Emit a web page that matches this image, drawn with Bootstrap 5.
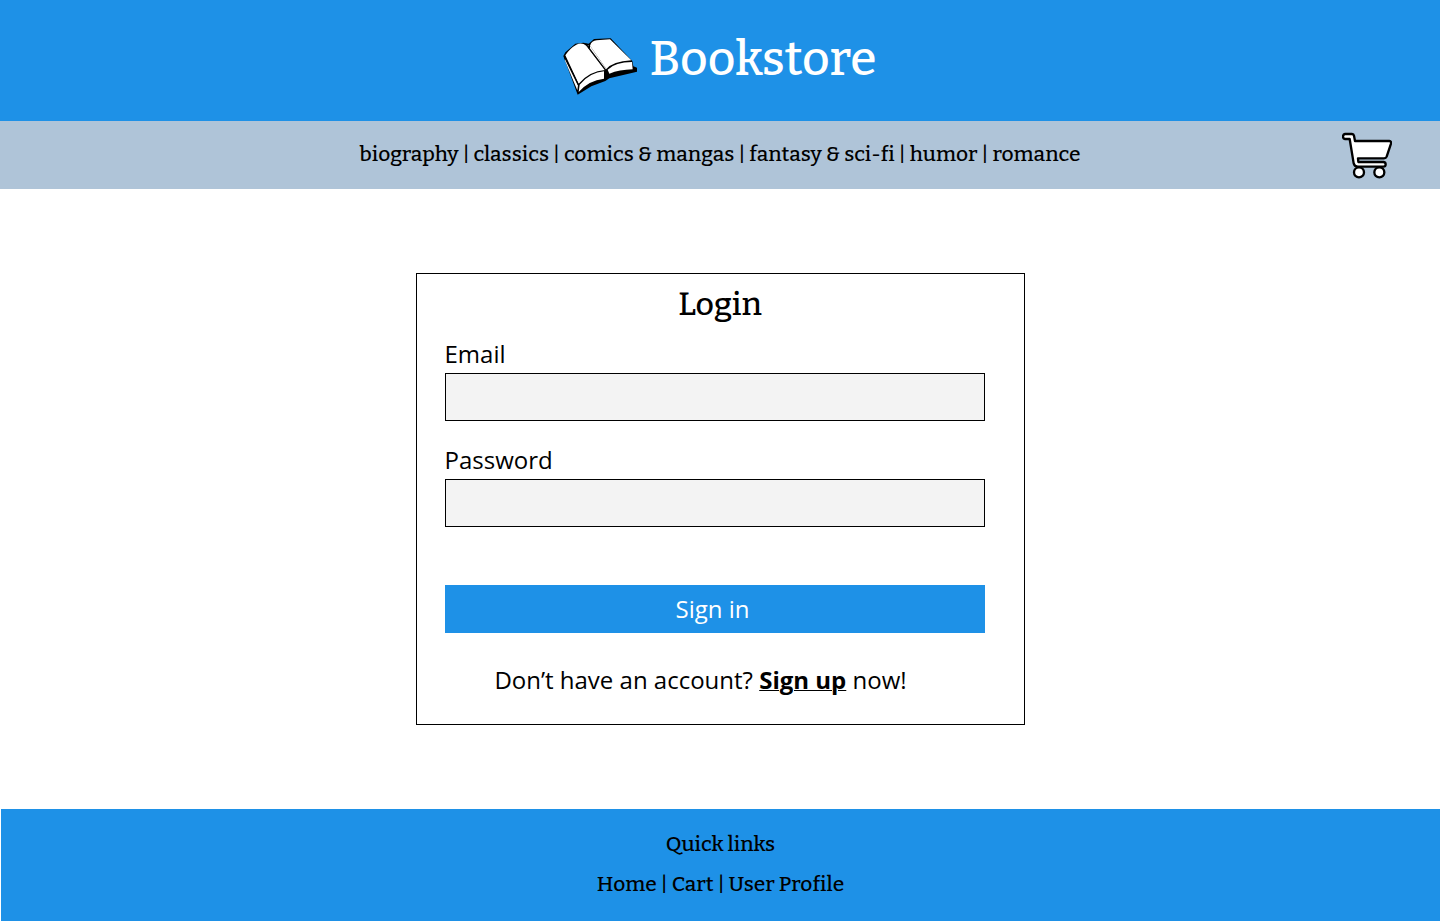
<!DOCTYPE html>
<html lang="en">
<head>
<meta charset="utf-8">
<meta name="viewport" content="width=device-width, initial-scale=1">
<title>Bookstore – Login</title>
<link href="https://cdn.jsdelivr.net/npm/bootstrap@5.3.0/dist/css/bootstrap.min.css" rel="stylesheet">
<style>
  :root { --brand: #1e91e7; --bar: #afc4d8; --slab: Bitter, "DejaVu Serif Condensed", "DejaVu Serif", serif; }
  body { font-family: "Open Sans", sans-serif; font-size: 24px; line-height: 32px; color: #000; }
  a { color: inherit; text-decoration: none; }
  .site-header { background: var(--brand); padding: 27px 0 24px; }
  .brand-link { font-family: var(--slab); font-weight: 500; font-size: 48px; line-height: 64px; color: #fff; gap: 12px; padding-right: 2px; }
  .brand-icon { margin-top: 10px; }
  .category-bar { background: var(--bar); padding: 10px 48px; min-height: 68px; }
  .category-bar, .site-footer { font-family: var(--slab); font-weight: 500; font-size: 21px; line-height: 40px; }
  .category-list { padding: 0 0 2px 50px; }
  .login-box { width: 609px; max-width: 100%; border: 1px solid #000; padding: 10px 39px 28px 28px; }
  .login-title { font-family: var(--slab); font-size: 32px; line-height: 40px; font-weight: 500; margin: 0 -11px 14px 0; }
  .login-field { height: 48px; background: #f3f3f3; border: 1px solid #000; border-radius: 0; font-size: 24px; }
  .login-label { line-height: 32px; margin-bottom: 3px; }
  .field-group { margin-bottom: 23px; }
  .login-button { height: 48px; margin-top: 58px; background: var(--brand); color: #fff; border: 0; border-radius: 0; font-size: 24px; line-height: 32px; padding: 8px 16px 8px 12px; }
  .signup-note { margin: 31px 28px 0 0; }
  .signup-link { text-decoration: underline; text-decoration-thickness: 1px; }
  .site-footer { background: var(--brand); padding: 15px 0 17px; margin-left: 1px; }
</style>
</head>
<body class="d-flex flex-column min-vh-100">
<header class="site-header d-flex justify-content-center">
  <a href="#" class="brand-link d-flex align-items-start">
    <svg class="brand-icon" width="76" height="60" viewBox="32 36 228 180" aria-hidden="true">
      <path d="M36 93L79 209L120 184L162 168L174 160L257 140V128L246 124L243 108L178 40L128 42L112 56L96 53L72 56L42 82Z" fill="#000"/>
      <path d="M42 91Q55 70 75 59Q91 51 105 62L161 135Q115 138 82 176Z" fill="#fff"/>
      <path d="M116 62Q121 47 136 46L176 43L240 106Q184 110 165 132Z" fill="#fff"/>
      <path d="M105 60L116 62L165 132L161 135Z" fill="#fff"/>
      <path d="M85 179Q117 142 158 139V161Q112 166 82 201Z" fill="#fff"/>
      <path d="M169 134Q192 111 242 111L244 133Q204 134 174 146Z" fill="#fff"/>
      <path d="M42 100L80 180L78 196L41 107Z" fill="#fff"/>
      <path d="M39 94L81 180M103 57Q110 64 114 71L164 137M114 70V58" fill="none" stroke="#000" stroke-width="4"/>
    </svg>
    <span>Bookstore</span>
  </a>
</header>
<nav class="category-bar d-flex align-items-center" aria-label="Categories">
  <div class="category-list flex-fill text-center"><a href="#">biography</a> | <a href="#">classics</a> | <a href="#">comics &amp; mangas</a> | <a href="#">fantasy &amp; sci-fi</a> | <a href="#">humor</a> | <a href="#">romance</a></div>
  <a href="#" class="d-flex" aria-label="Cart">
    <svg width="50" height="48" viewBox="36 48 150 144" fill="#fff" stroke="#000" stroke-width="7" stroke-linejoin="round">
      <path d="M45 57H66Q71 57 72 62L75 78H178Q185 79 183 86L170 125Q168 130 162 130H84L85 141H161Q167 142 167 148Q167 155 160 155H83Q73 155 71 145L59 72H45Q39 71 39 65Q39 58 45 57Z"/>
      <circle cx="87" cy="172" r="15"/>
      <circle cx="148" cy="172" r="15"/>
    </svg>
  </a>
</nav>
<main class="flex-grow-1 d-flex justify-content-center align-items-center py-5">
  <form class="login-box">
    <h1 class="login-title text-center">Login</h1>
    <div class="field-group">
      <label for="email" class="login-label d-block">Email</label>
      <input type="email" id="email" class="login-field form-control">
    </div>
    <div>
      <label for="password" class="login-label d-block">Password</label>
      <input type="password" id="password" class="login-field form-control">
    </div>
    <button type="submit" class="login-button btn w-100">Sign in</button>
    <p class="signup-note text-center">Don’t have an account? <a href="#" class="signup-link fw-bold">Sign up</a> now!</p>
  </form>
</main>
<footer class="site-footer text-center">
  <div>Quick links</div>
  <div><a href="#">Home</a> | <a href="#">Cart</a> | <a href="#">User Profile</a></div>
</footer>
</body>
</html>
